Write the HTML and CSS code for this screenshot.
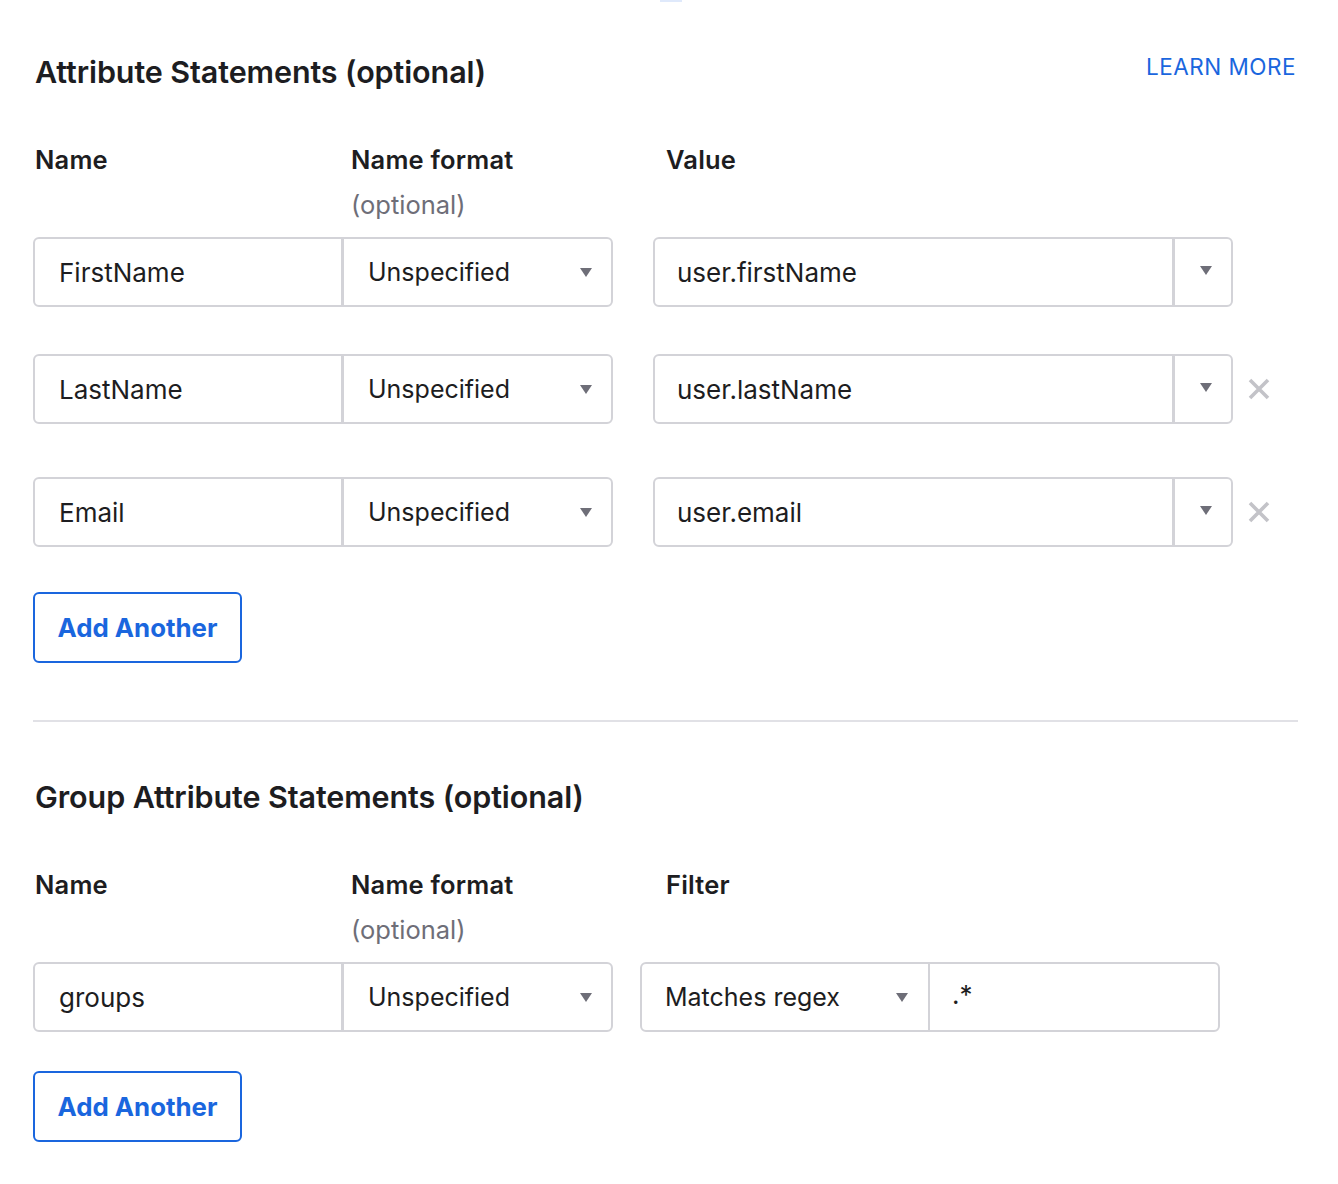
FILE: index.html
```html
<!DOCTYPE html>
<html lang="en">
<head>
<meta charset="utf-8">
<title>Attribute Statements</title>
<link rel="stylesheet" href="styles.css">
</head>
<body>
<div class="page">
  <div class="top-strip"><span class="top-dot"></span></div>

  <section class="section">
    <div class="section-head">
      <h2 class="section-title">Attribute Statements (optional)</h2>
      <a class="learn-more" href="#">LEARN MORE</a>
    </div>

    <div class="labels">
      <div class="label-cell"><div class="label">Name</div></div>
      <div class="label-cell"><div class="label">Name format</div><div class="label-sub">(optional)</div></div>
      <div class="label-cell label-cell-value"><div class="label">Value</div></div>
    </div>

    <div class="row">
      <div class="joined">
        <div class="cell cell-name">FirstName</div>
        <div class="cell cell-format"><span class="fmt">Unspecified</span><span class="caret"></span></div>
      </div>
      <div class="combo">
        <div class="combo-text">user.firstName</div>
        <div class="combo-btn"><span class="caret"></span></div>
      </div>
    </div>

    <div class="row row-2">
      <div class="joined">
        <div class="cell cell-name">LastName</div>
        <div class="cell cell-format"><span class="fmt">Unspecified</span><span class="caret"></span></div>
      </div>
      <div class="combo">
        <div class="combo-text">user.lastName</div>
        <div class="combo-btn"><span class="caret"></span></div>
      </div>
      <svg class="remove" width="24" height="24" viewBox="0 0 24 24"><path d="M3 3 L21 21 M21 3 L3 21" stroke="#c3c3c8" stroke-width="3.6" fill="none"/></svg>
    </div>

    <div class="row row-3">
      <div class="joined">
        <div class="cell cell-name">Email</div>
        <div class="cell cell-format"><span class="fmt">Unspecified</span><span class="caret"></span></div>
      </div>
      <div class="combo">
        <div class="combo-text">user.email</div>
        <div class="combo-btn"><span class="caret"></span></div>
      </div>
      <svg class="remove" width="24" height="24" viewBox="0 0 24 24"><path d="M3 3 L21 21 M21 3 L3 21" stroke="#c3c3c8" stroke-width="3.6" fill="none"/></svg>
    </div>

    <button class="add-btn add-btn-1" type="button">Add Another</button>
  </section>

  <hr class="divider">

  <section class="section">
    <div class="section-head">
      <h2 class="section-title section-title-2">Group Attribute Statements (optional)</h2>
    </div>

    <div class="labels">
      <div class="label-cell"><div class="label">Name</div></div>
      <div class="label-cell"><div class="label">Name format</div><div class="label-sub">(optional)</div></div>
      <div class="label-cell label-cell-value"><div class="label">Filter</div></div>
    </div>

    <div class="row">
      <div class="joined">
        <div class="cell cell-name">groups</div>
        <div class="cell cell-format"><span class="fmt">Unspecified</span><span class="caret"></span></div>
      </div>
      <div class="joined joined-filter">
        <div class="cell cell-filter"><span>Matches regex</span><span class="caret"></span></div>
        <div class="cell cell-regex">.*</div>
      </div>
    </div>

    <button class="add-btn add-btn-2" type="button">Add Another</button>
  </section>
</div>
</body>
</html>
```

FILE: styles.css
```css
* { box-sizing: border-box; }

html, body {
  margin: 0;
  padding: 0;
  background: #ffffff;
}

body {
  font-family: Inter, "Noto Sans", "Liberation Sans", sans-serif;
  color: #1d1d21;
}

.page {
  width: 1338px;
  padding: 0 40px 0 33px;
}

.top-strip {
  height: 2px;
  display: flex;
}

.top-dot {
  display: block;
  width: 22px;
  height: 2px;
  margin-left: 627px;
  background: #dfe9fb;
}

.section-head {
  display: flex;
  justify-content: space-between;
  align-items: flex-start;
  margin-top: 52px;
}

.section-title {
  margin: 0 0 0 2px;
  font-size: 30.5px;
  line-height: 36px;
  font-weight: 600;
  letter-spacing: -0.1px;
}

.section-title-2 {
  margin-top: 5px;
}

.learn-more {
  font-size: 22.5px;
  line-height: 26px;
  color: #1a66de;
  text-decoration: none;
  letter-spacing: 0.5px;
  margin-right: 2px;
}

.labels {
  display: grid;
  grid-template-columns: 316px 315px 1fr;
  padding-left: 2px;
  margin-top: 55px;
}

.label {
  font-size: 25.5px;
  line-height: 30px;
  font-weight: 600;
  letter-spacing: 0.2px;
}

.label-sub {
  margin-top: 15px;
  font-size: 25.5px;
  line-height: 30px;
  color: #6e6e78;
}

.row {
  display: flex;
  align-items: center;
  margin-top: 17px;
}

.row-2 { margin-top: 47px; }
.row-3 { margin-top: 53px; }

.joined {
  display: flex;
  width: 580px;
  height: 70px;
  border: 2px solid #d3d3d8;
  border-radius: 6px;
}

.cell {
  display: flex;
  align-items: center;
  font-size: 26px;
  color: #1d1d21;
}

.cell-name {
  width: 309px;
  padding-left: 24px;
  border-right: 3px solid #d3d3d8;
}

.cell-format {
  flex: 1;
  padding-left: 24px;
  padding-right: 19px;
  justify-content: space-between;
}

.fmt {
  font-size: 25px;
}

.caret {
  width: 0;
  height: 0;
  border-left: 6px solid transparent;
  border-right: 6px solid transparent;
  border-top: 9px solid #6e6e78;
}

.combo {
  display: flex;
  width: 580px;
  height: 70px;
  margin-left: 40px;
  border: 2px solid #d3d3d8;
  border-radius: 6px;
}

.combo-text {
  flex: 1;
  display: flex;
  align-items: center;
  padding-left: 22px;
  font-size: 26px;
  border-right: 3px solid #d3d3d8;
}

.combo-btn {
  width: 56px;
  display: flex;
  align-items: center;
  justify-content: center;
  padding-bottom: 4px;
  padding-left: 6px;
}

.remove {
  margin-left: 14px;
}

.joined-filter {
  width: 580px;
  margin-left: 27px;
}

.cell-filter {
  width: 288px;
  padding-left: 23px;
  padding-right: 20px;
  justify-content: space-between;
  border-right: 2px solid #d3d3d8;
  font-size: 25px;
}

.cell-regex {
  flex: 1;
  padding-left: 22px;
  padding-bottom: 6px;
}

.add-btn {
  display: block;
  width: 209px;
  height: 71px;
  background: #ffffff;
  border: 2px solid #1a66de;
  border-radius: 6px;
  color: #1a66de;
  font-family: inherit;
  font-size: 25.8px;
  font-weight: 700;
  padding: 0;
  cursor: pointer;
}

.add-btn-1 { margin-top: 45px; }
.add-btn-2 { margin-top: 39px; margin-bottom: 40px; }

.divider {
  margin: 57px 0 0 0;
  height: 2px;
  border: 0;
  background: #e1e1e6;
}
```
